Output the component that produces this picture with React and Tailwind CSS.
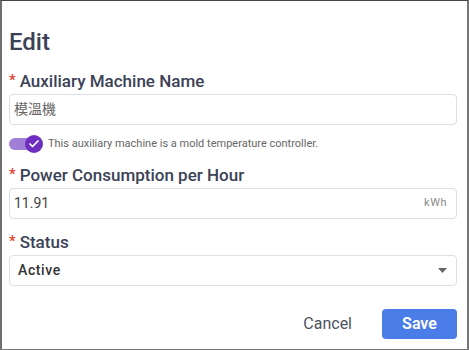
import { Check } from "lucide-react";

const Label = ({ children }) => (
  <div className="flex items-center h-[20px] text-[17px] leading-[20px] font-medium text-[#3b4256]">
    <span className="text-[#e0412e] text-[15px] mr-[4px] -mt-[2px]">*</span>
    {children}
  </div>
);

export default function App() {
  return (
    <div
      className="w-[469px] h-[350px] bg-white border-l-2 border-r-2 border-t border-b border-l-[#6e6e6e] border-r-[#777] border-t-[#444] border-b-[#777] box-border pl-[7px] pr-[10px] flex flex-col"
      style={{ fontFamily: "Roboto, 'Noto Sans CJK TC', sans-serif" }}
    >
      <h1 className="mt-[27px] text-[24px] leading-[28px] font-medium text-[#3b4256]">Edit</h1>

      <div className="mt-[15px]">
        <Label>Auxiliary Machine Name</Label>
      </div>
      <div className="mt-[3px] h-[31px] border border-[#dcdfe4] rounded-[4px] flex items-center px-[4px] text-[14px] text-[#666]">
        模溫機
      </div>

      <div className="mt-[10px] flex items-center h-[18px]">
        <div className="relative w-[34px] h-[18px]">
          <div className="absolute left-0 top-[3px] w-[30px] h-[12px] rounded-full bg-[#a07fd6]" />
          <div className="absolute right-0 top-0 w-[18px] h-[18px] rounded-full bg-[#6e2fc0] flex items-center justify-center">
            <Check size={12} strokeWidth={3.5} color="white" />
          </div>
        </div>
        <span className="ml-[5px] text-[11px] text-[#666]">
          This auxiliary machine is a mold temperature controller.
        </span>
      </div>

      <div className="mt-[12px]">
        <Label>Power Consumption per Hour</Label>
      </div>
      <div className="mt-[3px] h-[31px] border border-[#dcdfe4] rounded-[4px] flex items-center justify-between pl-[4px] pr-[9px]">
        <span className="text-[14px] text-[#444]">11.91</span>
        <span className="text-[11px] text-[#888] tracking-[0.5px]">kWh</span>
      </div>

      <div className="mt-[13px]">
        <Label>Status</Label>
      </div>
      <div className="mt-[3px] h-[31px] border border-[#dcdfe4] rounded-[4px] flex items-center justify-between pl-[8px] pr-[9px]">
        <span className="text-[14px] text-[#333] tracking-[0.6px] font-medium">Active</span>
        <svg width="9" height="5" viewBox="0 0 9 5">
          <path d="M0 0 L9 0 L4.5 5 Z" fill="#666" />
        </svg>
      </div>

      <div className="mt-[23px] flex justify-end items-center">
        <button className="text-[16px] text-[#4d5261] mr-[30px]">Cancel</button>
        <button className="w-[75px] h-[30px] rounded-[4px] bg-[#4a7de8] text-white text-[16px] font-semibold">
          Save
        </button>
      </div>
    </div>
  );
}
